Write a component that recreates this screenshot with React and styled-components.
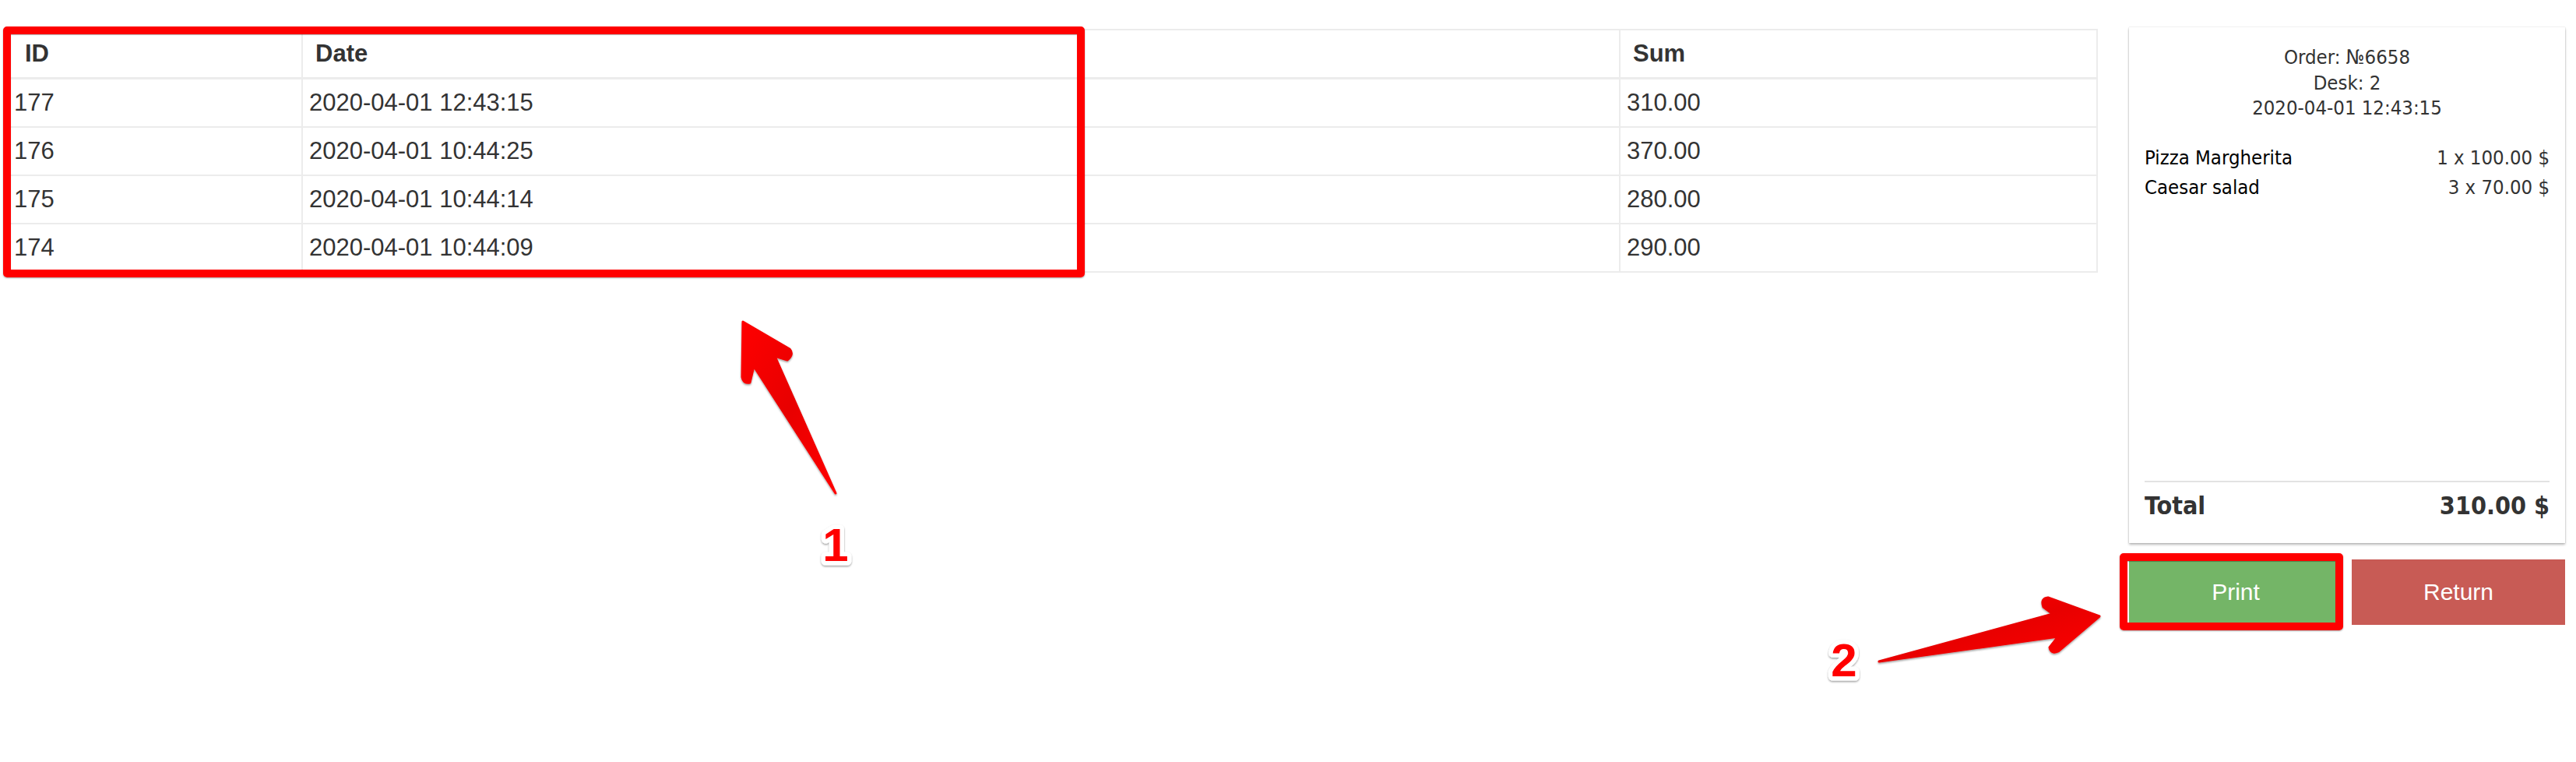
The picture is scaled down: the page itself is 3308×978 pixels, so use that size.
import React from 'react';
import styled, { createGlobalStyle } from 'styled-components';

const GlobalStyle=createGlobalStyle`
  html, body {
    margin: 0;
    padding: 0;
    background: #fff;
  }
  body {
    font-family: "Liberation Sans", Arial, sans-serif;
    color: #333;
  }
`;

const Page=styled.div`
  position: relative;
  display: flex;
  align-items: flex-start;
  gap: 40px;
  height: 978px;
  box-sizing: border-box;
  padding: 35px 14px 0 8px;
  overflow: hidden;
`;

const TableWrap=styled.div`
  flex: 1;
  margin-top: 2px;
`;

const Table=styled.table`
  width: 100%;
  table-layout: fixed;
  border-collapse: separate;
  border-spacing: 0;
  border-top: 2px solid #ececec;
  border-left: 2px solid #ececec;
  font-size: 31px;
  line-height: 44px;
  color: #333;
`;

const Th=styled.th`
  text-align: left;
  font-weight: bold;
  padding: 8px 16px;
  border-right: 2px solid #ececec;
  border-bottom: 3px solid #ececec;

  &:first-child {
    padding-left: 22px;
  }
`;

const Td=styled.td`
  padding: 8px;
  border-right: 2px solid #ececec;
  border-bottom: 2px solid #ececec;
  white-space: nowrap;
`;

const Side=styled.div`
  width: 560px;
  display: flex;
  flex-direction: column;
`;

const Receipt=styled.div`
  height: 662px;
  box-sizing: border-box;
  padding: 22px 20px 28px;
  display: flex;
  flex-direction: column;
  background: #fff;
  box-shadow: 0 2px 3px rgba(0, 0, 0, 0.28), 0 0 1px rgba(0, 0, 0, 0.25);
  font-family: "DejaVu Sans Condensed", "DejaVu Sans", sans-serif;
  font-stretch: condensed;
`;

const ReceiptHead=styled.div`
  text-align: center;
  font-size: 25.5px;
  line-height: 32.5px;
  color: #333;
`;

const Items=styled.div`
  flex: 1;
  margin-top: 28px;
`;

const Item=styled.div`
  display: flex;
  justify-content: space-between;
  font-size: 25.5px;
  line-height: 38px;
`;

const ItemName=styled.span`
  color: #000;
`;

const ItemPrice=styled.span`
  color: #333;
`;

const Total=styled.div`
  display: flex;
  justify-content: space-between;
  border-top: 2px solid #e3e3e3;
  padding-top: 10px;
  font-size: 32px;
  line-height: 40px;
  font-weight: bold;
  color: #333;
`;

const Buttons=styled.div`
  display: grid;
  grid-template-columns: 1fr 1fr;
  gap: 12px;
  margin-top: 21px;
`;

const Button=styled.button`
  height: 84px;
  border: none;
  border-radius: 0;
  padding: 0;
  font-family: "Liberation Sans", Arial, sans-serif;
  font-size: 30px;
  color: #fff;
  background: ${p => p.$variant === 'danger' ? '#c85b55' : '#74b567'};
  cursor: pointer;
`;

const Highlight=styled.div`
  position: absolute;
  left: ${p => p.$x}px;
  top: ${p => p.$y}px;
  width: ${p => p.$w}px;
  height: ${p => p.$h}px;
  box-sizing: border-box;
  border: 10px solid #ff0000;
  border-radius: 5px;
  box-shadow: 0 1px 2px rgba(0, 0, 0, 0.35), inset 0 1px 1px rgba(0, 0, 0, 0.3);
  pointer-events: none;
`;

const Overlay=styled.svg`
  position: absolute;
  left: 0;
  top: 0;
  pointer-events: none;
`;

const orders=[
  { id: 177, date: '2020-04-01 12:43:15', sum: '310.00' },
  { id: 176, date: '2020-04-01 10:44:25', sum: '370.00' },
  { id: 175, date: '2020-04-01 10:44:14', sum: '280.00' },
  { id: 174, date: '2020-04-01 10:44:09', sum: '290.00' }
];

const items=[
  { name: 'Pizza Margherita', price: '1 x 100.00 $' },
  { name: 'Caesar salad', price: '3 x 70.00 $' }
];

const Annotations=()=>(
  <Overlay width="3308" height="978" viewBox="0 0 3308 978">
    <defs>
      <linearGradient id="arrowFill" x1="0" y1="0" x2="1" y2="1">
        <stop offset="0" stopColor="#ff0000"/>
        <stop offset="0.5" stopColor="#e80000"/>
        <stop offset="1" stopColor="#ff0000"/>
      </linearGradient>
      <filter id="soft" x="-10%" y="-10%" width="120%" height="130%">
        <feDropShadow dx="0" dy="1.5" stdDeviation="1" floodColor="#000" floodOpacity="0.4"/>
      </filter>
    </defs>
    <g fill="url(#arrowFill)" stroke="url(#arrowFill)" strokeWidth="3" strokeLinejoin="round" filter="url(#soft)">
      <path d="M1073 633 L995 457 L1011 462 Q1020 455 1014 448 L954 413 L953 484 Q955 493 963 491 L968 470 Z"/>
      <path d="M2413 849 L2636 788 L2624 779 Q2620 768 2630 767 L2696 791 L2643 836 Q2634 840 2632 831 L2643 817 Z"/>
    </g>
    <g fontFamily="Liberation Sans, Arial, sans-serif" fontWeight="bold" fontSize="60" textAnchor="middle"
      fill="#ff0000" stroke="#ffffff" strokeWidth="11" strokeLinejoin="round" paintOrder="stroke" filter="url(#soft)">
      <text x="1073" y="720">1</text>
      <text x="2368" y="868">2</text>
    </g>
  </Overlay>
);

export default function App(){
  return (
    <Page>
      <GlobalStyle/>
      <TableWrap>
        <Table>
          <colgroup>
            <col style={{ width: '379px' }}/>
            <col style={{ width: '1692px' }}/>
            <col/>
          </colgroup>
          <thead>
            <tr>
              <Th>ID</Th>
              <Th>Date</Th>
              <Th>Sum</Th>
            </tr>
          </thead>
          <tbody>
            {orders.map(o => (
              <tr key={o.id}>
                <Td>{o.id}</Td>
                <Td>{o.date}</Td>
                <Td>{o.sum}</Td>
              </tr>
            ))}
          </tbody>
        </Table>
      </TableWrap>
      <Side>
        <Receipt>
          <ReceiptHead>
            <div>Order: №6658</div>
            <div>Desk: 2</div>
            <div>2020-04-01 12:43:15</div>
          </ReceiptHead>
          <Items>
            {items.map(i => (
              <Item key={i.name}>
                <ItemName>{i.name}</ItemName>
                <ItemPrice>{i.price}</ItemPrice>
              </Item>
            ))}
          </Items>
          <Total>
            <span>Total</span>
            <span>310.00 $</span>
          </Total>
        </Receipt>
        <Buttons>
          <Button>Print</Button>
          <Button $variant="danger">Return</Button>
        </Buttons>
      </Side>
      <Highlight $x={4} $y={34} $w={1389} $h={322}/>
      <Highlight $x={2722} $y={710} $w={287} $h={99}/>
      <Annotations/>
    </Page>
  );
}
